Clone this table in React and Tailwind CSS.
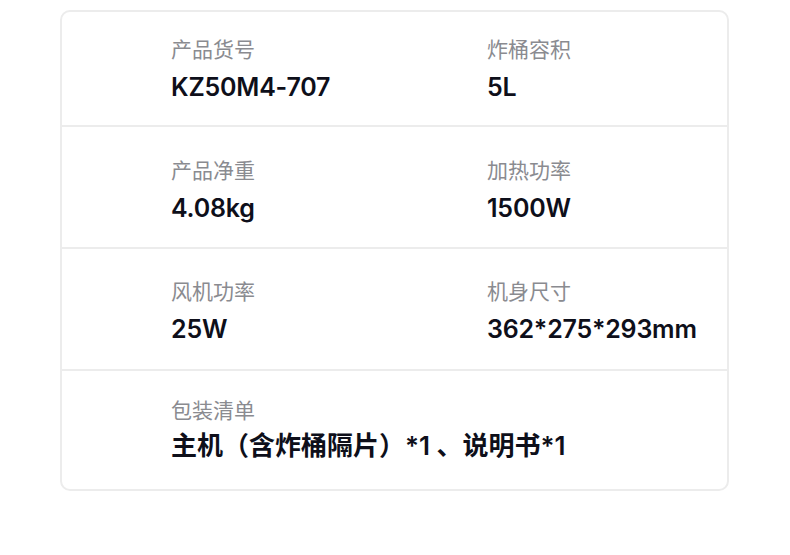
const rows = [
  {
    h: 'h-[113px]',
    pt: 'pt-[24px]',
    cells: [
      { label: '产品货号', value: 'KZ50M4-707' },
      { label: '炸桶容积', value: '5L' },
    ],
  },
  {
    h: 'h-[122px]',
    pt: 'pt-[30px]',
    cells: [
      { label: '产品净重', value: '4.08kg' },
      { label: '加热功率', value: '1500W' },
    ],
  },
  {
    h: 'h-[122px]',
    pt: 'pt-[29px]',
    cells: [
      { label: '风机功率', value: '25W' },
      { label: '机身尺寸', value: '362*275*293mm' },
    ],
  },
]

function Cell({ label, value }) {
  return (
    <div className="flex flex-col">
      <span className="text-[21px] leading-[28px] text-[#8a8b90]">{label}</span>
      <span className="mt-[7px] text-[25px] leading-[32px] font-semibold tracking-[-0.2px] text-[#0e0f1a]">{value}</span>
    </div>
  )
}

export default function App() {
  return (
    <div
      className="w-[790px] h-[555px] bg-white pt-[10px] pl-[60px]"
      style={{ fontFamily: 'Inter, "Noto Sans CJK SC", sans-serif' }}
    >
      <div className="w-[669px] rounded-[10px] border-2 border-[#ececec] overflow-hidden">
        {rows.map((row, i) => (
          <div
            key={i}
            className={`${row.h} ${row.pt} ${i > 0 ? 'border-t-2 border-[#ececec]' : ''} pl-[109px] grid grid-cols-[316px_1fr]`}
          >
            {row.cells.map((c) => (
              <Cell key={c.label} {...c} />
            ))}
          </div>
        ))}
        <div className="h-[120px] pt-[26px] border-t-2 border-[#ececec] pl-[109px]">
          <div className="flex flex-col">
            <span className="text-[21px] leading-[28px] text-[#8a8b90]">包装清单</span>
            <span className="mt-[5px] text-[26px] leading-[32px] font-semibold text-[#0e0f1a]">
              主机（含炸桶隔片）*1 、说明书*1
            </span>
          </div>
        </div>
      </div>
    </div>
  )
}
